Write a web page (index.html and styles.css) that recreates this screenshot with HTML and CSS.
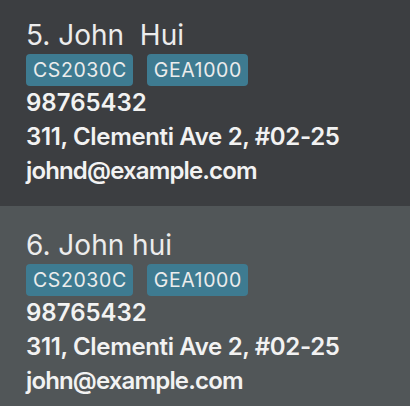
FILE: index.html
```html
<!DOCTYPE html>
<html>
<head>
<meta charset="utf-8">
<link rel="stylesheet" href="styles.css">
</head>
<body>
<div class="list">
  <div class="card even">
    <div class="name">5. John  Hui</div>
    <div class="tags"><span class="tag">CS2030C</span><span class="tag">GEA1000</span></div>
    <div class="detail">98765432</div>
    <div class="detail address">311, Clementi Ave 2, #02-25</div>
    <div class="detail email">johnd@example.com</div>
  </div>
  <div class="card odd">
    <div class="name">6. John hui</div>
    <div class="tags"><span class="tag">CS2030C</span><span class="tag">GEA1000</span></div>
    <div class="detail">98765432</div>
    <div class="detail address">311, Clementi Ave 2, #02-25</div>
    <div class="detail email">john@example.com</div>
  </div>
</div>
</body>
</html>
```
FILE: styles.css
```css
html, body {
  margin: 0;
  padding: 0;
  background: #515658;
  overflow: hidden;
}
body {
  width: 410px;
  height: 406px;
  font-family: Inter, "Noto Sans", sans-serif;
  color: #f2f2f2;
}
.list {
  display: flex;
  flex-direction: column;
  margin-top: -4px;
}
.card {
  height: 210px;
  box-sizing: border-box;
  padding: 23px 0 0 26px;
  display: flex;
  flex-direction: column;
}
.even { background: #3c3e41; }
.odd { background: #515658; }
.name {
  font-size: 28px;
  line-height: 32px;
  font-weight: 400;
  white-space: pre;
  color: #ececec;
}
.tags {
  display: flex;
  gap: 14px;
  margin-top: 3px;
}
.tag {
  background: #3e7b91;
  border-radius: 4px;
  height: 32px;
  line-height: 32px;
  padding: 0 6px 0 7px;
  font-size: 19.5px;
  letter-spacing: 0.6px;
  color: #ececec;
}
.detail {
  font-size: 24px;
  line-height: 34px;
  font-weight: 600;
  color: #f2f2f2;
}
.address { letter-spacing: -0.35px; }
.email { letter-spacing: -0.85px; }
```
